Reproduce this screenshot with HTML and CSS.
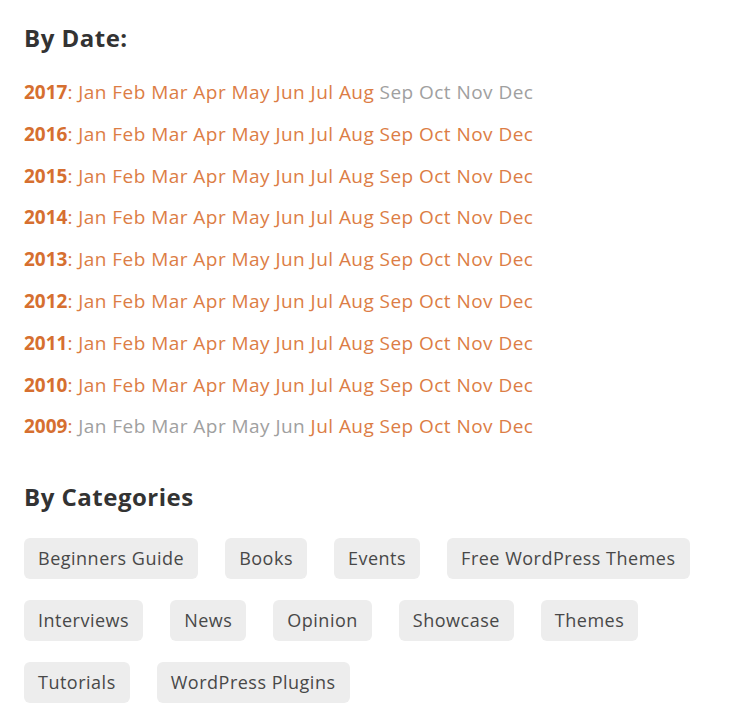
FILE: index.html
```html
<!DOCTYPE html>
<html lang="en">
<head>
    <meta charset="UTF-8">
    <title>Archives</title>
    <link rel="stylesheet" href="styles.css">
</head>
<body>
    <div class="archives">
        <h2>By Date:</h2>
        <ul class="dates">
            <li><strong>2017</strong>: <a>Jan</a> <a>Feb</a> <a>Mar</a> <a>Apr</a> <a>May</a> <a>Jun</a> <a>Jul</a> <a>Aug</a> <span>Sep</span> <span>Oct</span> <span>Nov</span> <span>Dec</span></li>
            <li><strong>2016</strong>: <a>Jan</a> <a>Feb</a> <a>Mar</a> <a>Apr</a> <a>May</a> <a>Jun</a> <a>Jul</a> <a>Aug</a> <a>Sep</a> <a>Oct</a> <a>Nov</a> <a>Dec</a></li>
            <li><strong>2015</strong>: <a>Jan</a> <a>Feb</a> <a>Mar</a> <a>Apr</a> <a>May</a> <a>Jun</a> <a>Jul</a> <a>Aug</a> <a>Sep</a> <a>Oct</a> <a>Nov</a> <a>Dec</a></li>
            <li><strong>2014</strong>: <a>Jan</a> <a>Feb</a> <a>Mar</a> <a>Apr</a> <a>May</a> <a>Jun</a> <a>Jul</a> <a>Aug</a> <a>Sep</a> <a>Oct</a> <a>Nov</a> <a>Dec</a></li>
            <li><strong>2013</strong>: <a>Jan</a> <a>Feb</a> <a>Mar</a> <a>Apr</a> <a>May</a> <a>Jun</a> <a>Jul</a> <a>Aug</a> <a>Sep</a> <a>Oct</a> <a>Nov</a> <a>Dec</a></li>
            <li><strong>2012</strong>: <a>Jan</a> <a>Feb</a> <a>Mar</a> <a>Apr</a> <a>May</a> <a>Jun</a> <a>Jul</a> <a>Aug</a> <a>Sep</a> <a>Oct</a> <a>Nov</a> <a>Dec</a></li>
            <li><strong>2011</strong>: <a>Jan</a> <a>Feb</a> <a>Mar</a> <a>Apr</a> <a>May</a> <a>Jun</a> <a>Jul</a> <a>Aug</a> <a>Sep</a> <a>Oct</a> <a>Nov</a> <a>Dec</a></li>
            <li><strong>2010</strong>: <a>Jan</a> <a>Feb</a> <a>Mar</a> <a>Apr</a> <a>May</a> <a>Jun</a> <a>Jul</a> <a>Aug</a> <a>Sep</a> <a>Oct</a> <a>Nov</a> <a>Dec</a></li>
            <li><strong>2009</strong>: <span>Jan</span> <span>Feb</span> <span>Mar</span> <span>Apr</span> <span>May</span> <span>Jun</span> <a>Jul</a> <a>Aug</a> <a>Sep</a> <a>Oct</a> <a>Nov</a> <a>Dec</a></li>
        </ul>
        <h2>By Categories</h2>
        <div class="tags">
            <a>Beginners Guide</a>
            <a>Books</a>
            <a>Events</a>
            <a>Free WordPress Themes</a>
            <a>Interviews</a>
            <a>News</a>
            <a>Opinion</a>
            <a>Showcase</a>
            <a>Themes</a>
            <a>Tutorials</a>
            <a>WordPress Plugins</a>
        </div>
    </div>
</body>
</html>
```

FILE: styles.css
```css
body { margin: 0; background: #fff; font-family: "Open Sans", "Liberation Sans", sans-serif; }
.archives { padding: 22px 24px 0; }
.archives h2 { margin: 0; font-size: 24px; font-weight: bold; color: #333; line-height: 32px; letter-spacing: 0.5px; }
.dates { list-style-type: none; padding: 0; margin: 18px 0 33px; }
.dates li { font-size: 19px; line-height: 41.8px; color: #d9753b; white-space: nowrap; letter-spacing: 0.45px; }
.dates strong { color: #d66f30; letter-spacing: 0; }
.dates a { color: #dc7d45; }
.dates span { color: #a0a0a0; }
.tags { display: flex; flex-wrap: wrap; column-gap: 27px; row-gap: 21px; margin-top: 25px; }
.tags a { background-color: #ededed; color: #484848; font-size: 18px; line-height: 41px; padding: 0 14px; border-radius: 6px; letter-spacing: 0.5px; }
```
